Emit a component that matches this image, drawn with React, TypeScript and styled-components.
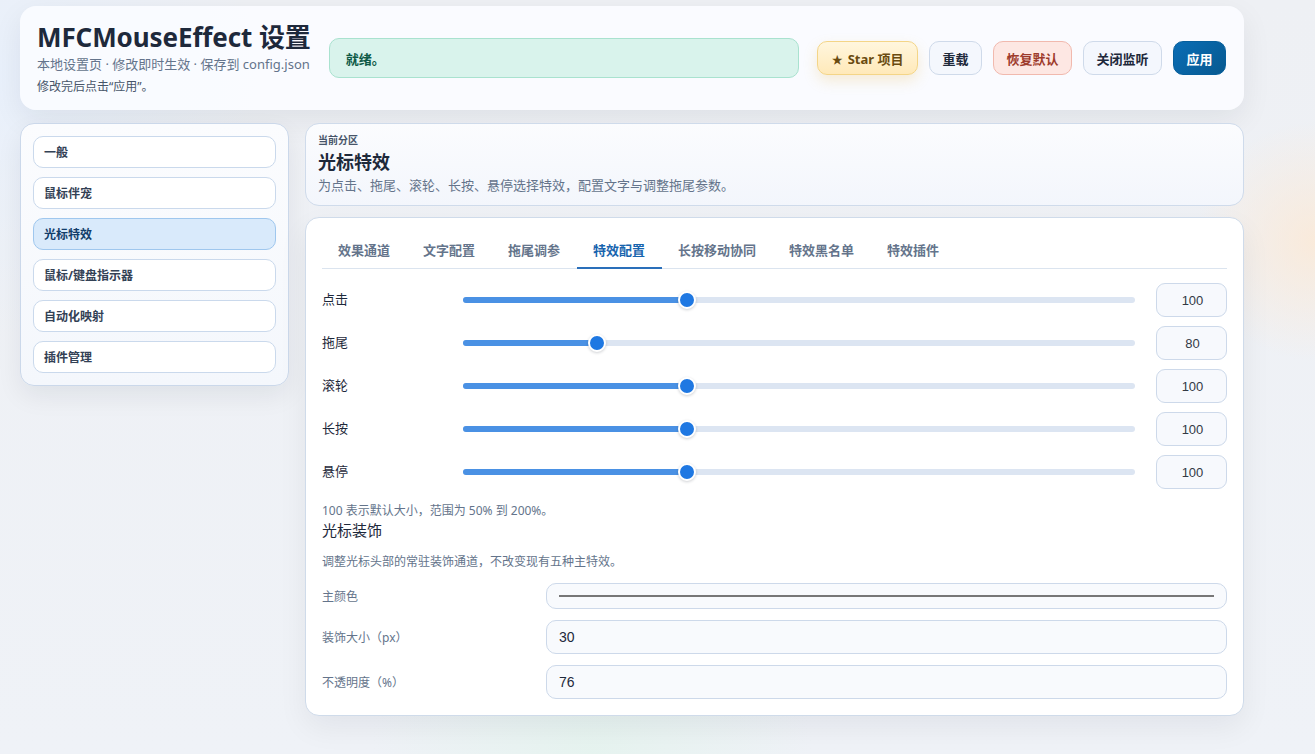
import React from "react";
import styled, { createGlobalStyle, css } from "styled-components";

const GlobalStyle = createGlobalStyle`
  * { box-sizing: border-box; }
  html, body { margin: 0; padding: 0; }
  body {
    min-height: 754px;
    font-family: "Noto Sans", "Noto Sans CJK SC", sans-serif;
    color: #1e293b;
    background:
      radial-gradient(circle at 100% 32%, rgba(253, 232, 210, 0.75) 0, rgba(253, 232, 210, 0) 120px),
      radial-gradient(circle at 45% 100%, rgba(226, 244, 236, 0.7) 0, rgba(226, 244, 236, 0) 220px),
      radial-gradient(circle at 0% 10%, rgba(232, 240, 252, 0.9) 0, rgba(232, 240, 252, 0) 260px),
      linear-gradient(180deg, #eef0f4 0%, #eff2f7 100%);
  }
`;

const Page = styled.div`
  width: 1224px;
  margin: 6px 0 0 20px;
  display: flex;
  flex-direction: column;
  gap: 13px;
`;

const Header = styled.header`
  height: 104px;
  padding: 0 18px 0 17px;
  display: flex;
  align-items: center;
  gap: 18px;
  background: rgba(250, 251, 255, 0.95);
  border-radius: 16px;
  box-shadow: 0 10px 30px rgba(15, 23, 42, 0.07);
`;

const TitleBlock = styled.div`
  display: flex;
  flex-direction: column;
`;

const Title = styled.h1`
  margin: 0;
  font-size: 26px;
  font-weight: 700;
  line-height: 32px;
  color: #1e293b;
  letter-spacing: -0.1px;
`;

const SubLine = styled.div`
  margin-top: 1px;
  font-size: 13px;
  line-height: 20px;
  color: #64748b;
`;

const Note = styled.div`
  margin-top: 4px;
  font-size: 12px;
  line-height: 18px;
  color: #475569;
`;

const Status = styled.div`
  flex: 1;
  height: 40px;
  display: flex;
  align-items: center;
  padding: 0 16px;
  background: #d9f3ec;
  border: 1px solid #a9e2cf;
  border-radius: 10px;
  font-size: 13px;
  font-weight: 700;
  color: #0f5a47;
`;

const Actions = styled.div`
  display: flex;
  gap: 11px;
`;

type Tone = "star" | "plain" | "danger" | "primary";

const toneStyles: Record<Tone, ReturnType<typeof css>> = {
  star: css`
    padding: 0 13.5px;
    background: linear-gradient(180deg, #fff6de 0%, #ffe9b9 100%);
    border-color: #f4d587;
    color: #6a4b10;
    box-shadow: 0 6px 14px rgba(230, 180, 70, 0.22);
  `,
  plain: css`
    background: #f4f7fd;
    border-color: #cfdaea;
    color: #1e293b;
  `,
  danger: css`
    background: #fde7e3;
    border-color: #f1b9ae;
    color: #9d3a2b;
  `,
  primary: css`
    background: linear-gradient(135deg, #0a6db5 0%, #075990 100%);
    border-color: #075f9c;
    color: #ffffff;
  `,
};

const Button = styled.button<{ $tone: Tone }>`
  height: 34px;
  padding: 0 12.5px;
  border: 1px solid;
  border-radius: 10px;
  font-family: inherit;
  font-size: 13px;
  font-weight: 700;
  white-space: nowrap;
  ${(p) => toneStyles[p.$tone]}
`;

const StarGlyph = styled.span`
  margin-right: 5px;
  font-size: 11px;
`;

const Body = styled.div`
  display: grid;
  grid-template-columns: 269px 939px;
  gap: 16px;
  align-items: start;
`;

const Sidebar = styled.nav`
  padding: 12px;
  display: flex;
  flex-direction: column;
  gap: 9px;
  background: linear-gradient(180deg, #fbfcfe 0%, #f4f7fc 100%);
  border: 1px solid #cbd8ea;
  border-radius: 14px;
  box-shadow: 0 10px 26px rgba(15, 23, 42, 0.07);
`;

const NavItem = styled.div<{ $active?: boolean }>`
  height: 32px;
  display: flex;
  align-items: center;
  padding: 0 10px;
  border: 1px solid ${(p) => (p.$active ? "#9fc7ee" : "#cad9ec")};
  border-radius: 10px;
  background: ${(p) => (p.$active ? "#d9eafb" : "#ffffff")};
  font-size: 12px;
  font-weight: 700;
  color: ${(p) => (p.$active ? "#123d6a" : "#334155")};
`;

const Main = styled.main`
  display: flex;
  flex-direction: column;
  gap: 11px;
`;

const SectionCard = styled.section`
  height: 83px;
  padding: 9px 12px 0 12px;
  background: linear-gradient(180deg, #fbfcfe 0%, #f3f6fc 100%);
  border: 1px solid #cfdbeb;
  border-radius: 14px;
`;

const Eyebrow = styled.div`
  font-size: 10px;
  font-weight: 700;
  line-height: 14px;
  color: #475569;
`;

const SectionTitle = styled.h2`
  margin: 2px 0 0;
  font-size: 18px;
  font-weight: 700;
  line-height: 26px;
  color: #1e293b;
`;

const SectionDesc = styled.div`
  font-size: 13px;
  line-height: 20px;
  color: #64748b;
`;

const ContentCard = styled.section`
  padding: 16px;
  background: #ffffff;
  border: 1px solid #cfdbea;
  border-radius: 14px;
  box-shadow: 0 12px 30px rgba(15, 23, 42, 0.06);
`;

const Tabs = styled.div`
  display: flex;
  border-bottom: 1px solid #dbe4ef;
`;

const Tab = styled.div<{ $active?: boolean }>`
  height: 35px;
  padding: 0 17px 3px 16px;
  display: flex;
  align-items: center;
  font-size: 13px;
  font-weight: ${(p) => (p.$active ? 700 : 600)};
  color: ${(p) => (p.$active ? "#1764ae" : "#64748b")};
  border-bottom: 2px solid ${(p) => (p.$active ? "#2a6fba" : "transparent")};
  margin-bottom: -1px;
`;

const Sliders = styled.div`
  margin-top: 14px;
  display: flex;
  flex-direction: column;
  gap: 10px;
`;

const SliderRow = styled.div`
  display: grid;
  grid-template-columns: 141px 1fr 71px;
  align-items: center;
  height: 33px;
`;

const RowLabel = styled.div`
  font-size: 13px;
  line-height: 18px;
  padding-bottom: 3px;
  color: #1e293b;
`;

const Track = styled.div`
  position: relative;
  height: 6px;
  margin-right: 21px;
  border-radius: 3px;
  background: #dce5f2;
`;

const Fill = styled.div`
  position: absolute;
  left: 0;
  top: 0;
  bottom: 0;
  border-radius: 3px;
  background: #4a91e4;
`;

const Thumb = styled.div`
  position: absolute;
  top: 50%;
  width: 18px;
  height: 18px;
  margin: -9px 0 0 -9px;
  border-radius: 50%;
  background: #1f78e2;
  border: 2px solid #ffffff;
  box-shadow: 0 1px 3px rgba(15, 23, 42, 0.2);
`;

const NumberBox = styled.div`
  height: 34px;
  display: flex;
  align-items: center;
  justify-content: center;
  padding-left: 2px;
  background: #f7f9fd;
  border: 1px solid #cdd9ea;
  border-radius: 9px;
  font-family: "Liberation Sans", Arial, sans-serif;
  font-size: 13px;
  color: #333a45;
`;

const Hint = styled.div`
  margin-top: 14px;
  font-size: 12px;
  line-height: 17px;
  color: #64748b;
`;

const SubHeading = styled.h3`
  margin: 0;
  font-size: 15px;
  font-weight: 400;
  line-height: 22px;
  color: #1e293b;
`;

const SubDesc = styled.div`
  margin-top: 12px;
  font-size: 12px;
  line-height: 17px;
  color: #64748b;
`;

const Form = styled.div`
  margin-top: 13px;
  display: flex;
  flex-direction: column;
  gap: 11px;
`;

const FormRow = styled.div`
  display: grid;
  grid-template-columns: 224px 1fr;
  align-items: center;
`;

const FormLabel = styled.div`
  font-size: 12px;
  color: #64748b;
`;

const Field = styled.div<{ $short?: boolean }>`
  height: ${(p) => (p.$short ? "26px" : "34px")};
  display: flex;
  align-items: center;
  padding: 0 12px;
  background: #f8fafd;
  border: 1px solid #cdd9ea;
  border-radius: 10px;
  font-family: "Liberation Sans", Arial, sans-serif;
  font-size: 14px;
  color: #1e293b;
`;

const Swatch = styled.div`
  flex: 1;
  height: 2px;
  background: #777777;
`;

const sliders = [
  { label: "点击", value: 100 },
  { label: "拖尾", value: 80 },
  { label: "滚轮", value: 100 },
  { label: "长按", value: 100 },
  { label: "悬停", value: 100 },
];

const navItems = ["一般", "鼠标伴宠", "光标特效", "鼠标/键盘指示器", "自动化映射", "插件管理"];
const tabs = ["效果通道", "文字配置", "拖尾调参", "特效配置", "长按移动协同", "特效黑名单", "特效插件"];

const MIN = 50;
const MAX = 200;

export default function App() {
  return (
    <>
      <GlobalStyle />
      <Page>
        <Header>
          <TitleBlock>
            <Title>MFCMouseEffect 设置</Title>
            <SubLine>本地设置页 · 修改即时生效 · 保存到 config.json</SubLine>
            <Note>修改完后点击“应用”。</Note>
          </TitleBlock>
          <Status>就绪。</Status>
          <Actions>
            <Button $tone="star">
              <StarGlyph>★</StarGlyph>Star 项目
            </Button>
            <Button $tone="plain">重载</Button>
            <Button $tone="danger">恢复默认</Button>
            <Button $tone="plain">关闭监听</Button>
            <Button $tone="primary">应用</Button>
          </Actions>
        </Header>

        <Body>
          <Sidebar>
            {navItems.map((item) => (
              <NavItem key={item} $active={item === "光标特效"}>
                {item}
              </NavItem>
            ))}
          </Sidebar>

          <Main>
            <SectionCard>
              <Eyebrow>当前分区</Eyebrow>
              <SectionTitle>光标特效</SectionTitle>
              <SectionDesc>为点击、拖尾、滚轮、长按、悬停选择特效，配置文字与调整拖尾参数。</SectionDesc>
            </SectionCard>

            <ContentCard>
              <Tabs>
                {tabs.map((t) => (
                  <Tab key={t} $active={t === "特效配置"}>
                    {t}
                  </Tab>
                ))}
              </Tabs>

              <Sliders>
                {sliders.map((s) => {
                  const pct = ((s.value - MIN) / (MAX - MIN)) * 100;
                  return (
                    <SliderRow key={s.label}>
                      <RowLabel>{s.label}</RowLabel>
                      <Track>
                        <Fill style={{ width: `${pct}%` }} />
                        <Thumb style={{ left: `${pct}%` }} />
                      </Track>
                      <NumberBox>{s.value}</NumberBox>
                    </SliderRow>
                  );
                })}
              </Sliders>

              <Hint>100 表示默认大小，范围为 50% 到 200%。</Hint>
              <SubHeading>光标装饰</SubHeading>
              <SubDesc>调整光标头部的常驻装饰通道，不改变现有五种主特效。</SubDesc>

              <Form>
                <FormRow>
                  <FormLabel>主颜色</FormLabel>
                  <Field $short>
                    <Swatch />
                  </Field>
                </FormRow>
                <FormRow>
                  <FormLabel>装饰大小（px）</FormLabel>
                  <Field>30</Field>
                </FormRow>
                <FormRow>
                  <FormLabel>不透明度（%）</FormLabel>
                  <Field>76</Field>
                </FormRow>
              </Form>
            </ContentCard>
          </Main>
        </Body>
      </Page>
    </>
  );
}
